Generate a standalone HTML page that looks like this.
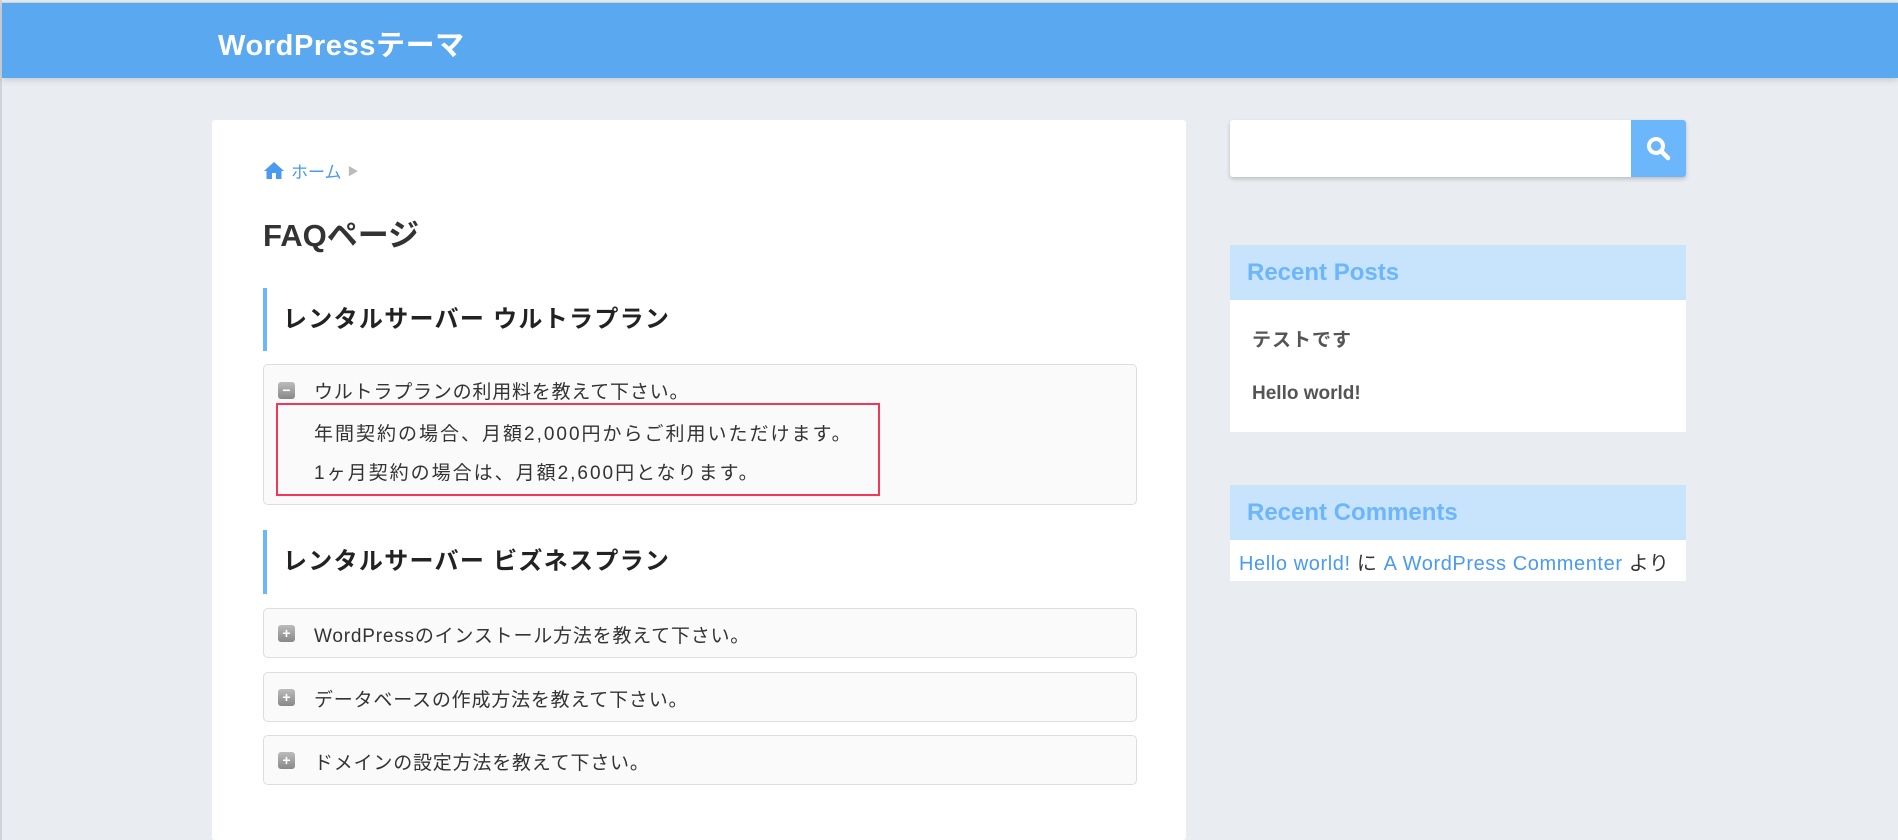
<!DOCTYPE html>
<html><head><meta charset="utf-8"><style>
*{margin:0;padding:0;box-sizing:border-box}
body{width:1898px;height:840px;background:#e9ecf1;font-family:"Liberation Sans","Noto Sans CJK JP",sans-serif;position:relative;overflow:hidden}
.bl{position:absolute;left:0;top:0;width:2px;height:840px;background:#d0d4da}
.hd{position:absolute;left:2px;top:2px;width:1896px;height:76px;background:#5aa9f0;box-shadow:0 2px 6px rgba(0,0,0,.15);border-top:1px solid #c9d3de}
.hd span{position:absolute;left:216px;top:19px;color:#fff;font-size:29px;font-weight:bold;letter-spacing:.6px}
.card{position:absolute;left:212px;top:120px;width:974px;height:720px;background:#fff;border-radius:3px}
.abs{position:absolute}
.bc{left:51px;top:38px;font-size:17px;color:#4a9af0;display:flex;align-items:center;gap:6px}
h1{position:absolute;left:51px;top:90px;font-size:31px;color:#333}
.h2{position:absolute;left:51px;width:880px;border-left:4px solid #6cb6fb;font-size:24px;font-weight:bold;color:#222;padding-left:16px;letter-spacing:1.3px}
.box{position:absolute;left:51px;width:874px;background:#fafafa;border:1px solid #ddd;border-radius:5px}
.q{position:absolute;left:50px;font-size:19px;color:#333;white-space:nowrap;letter-spacing:.8px}
.a{letter-spacing:2px}
.ic{position:absolute;left:14px;width:17px;height:17px;border-radius:3px;background:linear-gradient(#bbb,#888);color:#fff;font-size:14px;line-height:17px;text-align:center;font-weight:bold}
.red{position:absolute;left:64px;top:283px;width:604px;height:93px;border:2px solid #f0385a}
.side{position:absolute;left:1230px;width:456px}
.wh{background:#c8e3fc;color:#6cb6fb;font-size:24px;font-weight:bold;height:55px;line-height:55px;padding-left:17px}
</style></head><body>
<div class="bl"></div>
<div class="hd"><span>WordPressテーマ</span></div>
<div class="card">
 <div class="abs bc"><svg width="22" height="19" viewBox="0 0 22 19"><path d="M11 1 L1 10 L3.5 10 L3.5 18 L9 18 L9 12 L13 12 L13 18 L18.5 18 L18.5 10 L21 10 Z" fill="#4a9af0"/></svg><span>ホーム</span><span style="color:#bbb;font-size:11px">▶</span></div>
 <h1>FAQページ</h1>
 <div class="h2" style="top:168px;height:63px;line-height:63px">レンタルサーバー ウルトラプラン</div>
 <div class="box" style="top:244px;height:141px">
  <div class="ic" style="top:17px">−</div>
  <div class="q" style="top:12px">ウルトラプランの利用料を教えて下さい。</div>
  <div class="q a" style="top:54px">年間契約の場合、月額2,000円からご利用いただけます。</div>
  <div class="q a" style="top:93px">1ヶ月契約の場合は、月額2,600円となります。</div>
 </div>
 <div class="red"></div>
 <div class="h2" style="top:410px;height:64px;line-height:64px">レンタルサーバー ビズネスプラン</div>
 <div class="box" style="top:488px;height:50px"><div class="ic" style="top:16px">+</div><div class="q" style="top:12px">WordPressのインストール方法を教えて下さい。</div></div>
 <div class="box" style="top:552px;height:50px"><div class="ic" style="top:16px">+</div><div class="q" style="top:12px">データベースの作成方法を教えて下さい。</div></div>
 <div class="box" style="top:615px;height:50px"><div class="ic" style="top:16px">+</div><div class="q" style="top:12px">ドメインの設定方法を教えて下さい。</div></div>
</div>
<div class="side" style="top:120px;height:57px;background:#fff;border-radius:3px;box-shadow:0 2px 4px rgba(0,0,0,.2)">
 <div class="abs" style="right:0;top:0;width:55px;height:57px;background:#6cb6fb;border-radius:0 3px 3px 0">
  <svg class="abs" style="left:15px;top:16px" width="26" height="26" viewBox="0 0 26 26"><circle cx="10" cy="10" r="7" fill="none" stroke="#fff" stroke-width="4"/><path d="M15 15 L22 22" stroke="#fff" stroke-width="4.5" stroke-linecap="round"/></svg>
 </div>
</div>
<div class="side" style="top:245px">
 <div class="wh">Recent Posts</div>
 <div style="background:#fff;height:132px;position:relative;font-weight:bold;color:#555;font-size:19px">
  <div class="abs" style="left:22px;top:25px;letter-spacing:1px">テストです</div>
  <div class="abs" style="left:22px;top:83px">Hello world!</div>
 </div>
</div>
<div class="side" style="top:485px">
 <div class="wh">Recent Comments</div>
 <div style="background:#fff;height:41px;padding:7px 0 0 9px;font-size:20px;color:#333;white-space:nowrap;letter-spacing:.6px"><span style="color:#4a9af0">Hello world!</span> に <span style="color:#4a9af0">A WordPress Commenter</span> より</div>
</div>
</body></html>
